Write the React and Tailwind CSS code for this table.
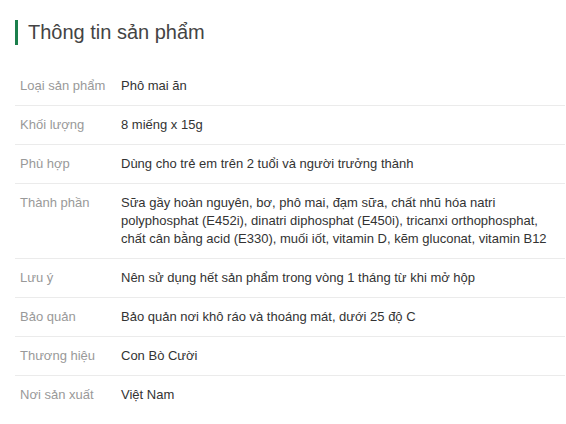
const rows = [
  ['Loại sản phẩm', 'Phô mai ăn'],
  ['Khối lượng', '8 miếng x 15g'],
  ['Phù hợp', 'Dùng cho trẻ em trên 2 tuổi và người trưởng thành'],
  [
    'Thành phần',
    'Sữa gầy hoàn nguyên, bơ, phô mai, đạm sữa, chất nhũ hóa natri polyphosphat (E452i), dinatri diphosphat (E450i), tricanxi orthophosphat, chất cân bằng acid (E330), muối iốt, vitamin D, kẽm gluconat, vitamin B12',
  ],
  ['Lưu ý', 'Nên sử dụng hết sản phẩm trong vòng 1 tháng từ khi mở hộp'],
  ['Bảo quản', 'Bảo quản nơi khô ráo và thoáng mát, dưới 25 độ C'],
  ['Thương hiệu', 'Con Bò Cười'],
  ['Nơi sản xuất', 'Việt Nam'],
]

export default function App() {
  return (
    <div className="min-h-screen bg-white font-['Liberation_Sans',Arial,sans-serif]">
      <div className="pl-[15px] pr-[1px] pt-5">
        <h2 className="flex items-center gap-[10px] h-[25px]">
          <span className="w-[3px] h-[25px] bg-[#1b7f4c]"></span>
          <span className="text-[20px] leading-[25px] text-[#444]">Thông tin sản phẩm</span>
        </h2>
        <div className="mt-[22px]">
          {rows.map(([label, value], i) => (
            <div
              key={label}
              className={`flex py-[10px] text-[13px] leading-[18px] ${
                i < rows.length - 1 ? 'border-b border-[#ebebeb]' : ''
              }`}
            >
              <div className="w-[106px] shrink-0 pl-[5px] text-[#999]">{label}</div>
              <div className="pr-[5px] text-[#333]">{value}</div>
            </div>
          ))}
        </div>
      </div>
    </div>
  )
}
